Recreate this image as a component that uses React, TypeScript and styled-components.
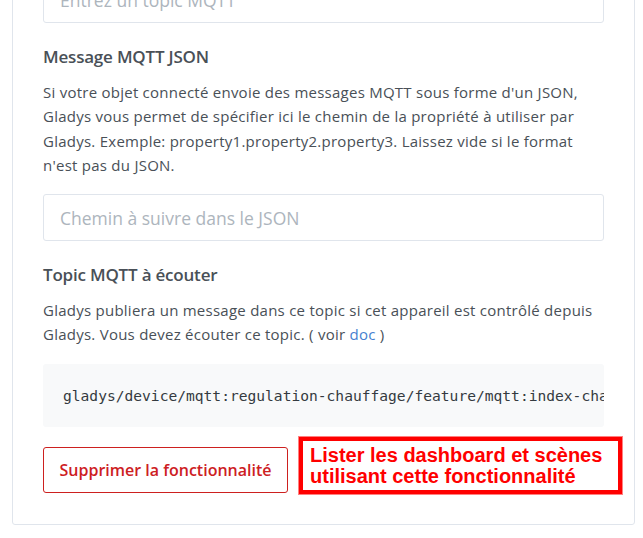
import React from "react";
import styled, { createGlobalStyle } from "styled-components";

const GlobalStyle = createGlobalStyle`
  html, body {
    margin: 0;
    padding: 0;
    background: #ffffff;
    overflow: hidden;
  }

  body {
    font-family: "Open Sans", "Noto Sans", sans-serif;
    color: #495057;
  }
`;

const Page = styled.div`
  margin-top: -40px;
  padding: 0 8px 0 12px;
`;

const Card = styled.div`
  background: #ffffff;
  border: 1px solid #e0e5ec;
  border-radius: 3px;
  padding: 15px 30px 30px;
`;

const Input = styled.input`
  display: block;
  box-sizing: border-box;
  width: 100%;
  height: 47px;
  padding: 8px 16px;
  font-family: inherit;
  font-size: 17.5px;
  color: #495057;
  border: 1px solid #e0e5ec;
  border-radius: 3px;
  outline: none;

  &::placeholder {
    color: #adb5bd;
  }
`;

const Section = styled.div`
  margin-top: 23px;
`;

const Title = styled.h5`
  margin: 0 0 12px;
  font-size: 17px;
  font-weight: 600;
  line-height: 22px;
  letter-spacing: -0.2px;
  color: #495057;
`;

const Text = styled.p`
  margin: 0 0 17px;
  font-size: 15px;
  line-height: 24.3px;
  letter-spacing: 0.25px;
`;

const DocLink = styled.a`
  color: #467fcf;
  text-decoration: none;
`;

const CodeBlock = styled.pre`
  margin: 0;
  padding: 20px;
  background: #f8f9fa;
  border-radius: 3px;
  overflow: hidden;
  font-family: "DejaVu Sans Mono", monospace;
  font-size: 14.6px;
  line-height: 23px;
  color: #343a40;
  white-space: pre;
`;

const Actions = styled.div`
  display: flex;
  align-items: flex-start;
  gap: 11px;
  margin-top: 20px;
`;

const DangerButton = styled.button`
  flex-shrink: 0;
  width: 245px;
  height: 46px;
  padding: 10px 12px;
  font-family: inherit;
  font-size: 16px;
  font-weight: 600;
  color: #cd201f;
  background: #ffffff;
  border: 1px solid #cd201f;
  border-radius: 3px;
`;

const Annotation = styled.div`
  flex-shrink: 0;
  width: 323px;
  margin-top: -10px;
  box-sizing: border-box;
  padding: 4px 7px 3px;
  border: 4px solid #ff0000;
  outline: 1px solid #ff8080;
  font-family: "Liberation Sans", Arial, sans-serif;
  font-weight: 700;
  font-size: 20px;
  line-height: 21px;
  color: #ff0000;
`;

const App: React.FC = () => {
  return (
    <Page>
      <GlobalStyle />
      <Card>
        <Input placeholder="Entrez un topic MQTT" />
        <Section>
          <Title>Message MQTT JSON</Title>
          <Text>
            Si votre objet connecté envoie des messages MQTT sous forme d'un JSON,
            <br />
            Gladys vous permet de spécifier ici le chemin de la propriété à utiliser par
            <br />
            Gladys. Exemple: property1.property2.property3. Laissez vide si le format
            <br />
            n'est pas du JSON.
          </Text>
          <Input placeholder="Chemin à suivre dans le JSON" />
        </Section>
        <Section>
          <Title>Topic MQTT à écouter</Title>
          <Text>
            Gladys publiera un message dans ce topic si cet appareil est contrôlé depuis
            <br />
            Gladys. Vous devez écouter ce topic. ( voir <DocLink href="#">doc</DocLink> )
          </Text>
          <CodeBlock>gladys/device/mqtt:regulation-chauffage/feature/mqtt:index-chauffage/set</CodeBlock>
        </Section>
        <Actions>
          <DangerButton>Supprimer la fonctionnalité</DangerButton>
          <Annotation>
            Lister les dashboard et scènes
            <br />
            utilisant cette fonctionnalité
          </Annotation>
        </Actions>
      </Card>
    </Page>
  );
};

export default App;
